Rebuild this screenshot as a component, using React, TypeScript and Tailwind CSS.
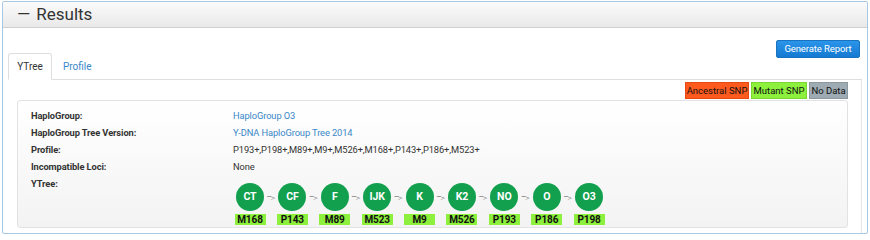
import React from "react";

const nodes = [
  ["CT", "M168"],
  ["CF", "P143"],
  ["F", "M89"],
  ["IJK", "M523"],
  ["K", "M9"],
  ["K2", "M526"],
  ["NO", "P193"],
  ["O", "P186"],
  ["O3", "P198"],
];

const rows: [string, React.ReactNode][] = [
  ["HaploGroup:", <span className="text-[#3a87c8]">HaploGroup O3</span>],
  ["HaploGroup Tree Version:", <span className="text-[#3a87c8]">Y-DNA HaploGroup Tree 2014</span>],
  ["Profile:", <span>P193+,P198+,M89+,M9+,M526+,M168+,P143+,P186+,M523+</span>],
  ["Incompatible Loci:", <span>None</span>],
];

export default function App() {
  return (
    <div className="w-[870px] h-[240px] bg-white" style={{ fontFamily: "Roboto, 'Liberation Sans', Arial, sans-serif" }}>
      <div className="ml-[2px] mt-[1px] w-[866px] h-[233px] border border-[#a6c8e4] rounded-[2px] flex flex-col overflow-hidden">
        <div className="h-[26px] bg-gradient-to-b from-[#fbfbfb] to-[#e9e9e9] border-b border-[#cfcfcf] flex items-center pl-[14px] text-[17px] text-[#333] leading-none shrink-0">
          <span className="mr-[6px]">—</span>
          <span>Results</span>
        </div>
        <div className="flex justify-end pr-[7px] pt-[12px]">
          <button className="h-[18px] w-[84px] text-[9.5px] tracking-[-0.1px] leading-none text-white rounded-[2px] bg-gradient-to-b from-[#2a95ea] to-[#1479d2] border border-[#1a73c0]">
            Generate Report
          </button>
        </div>
        <div className="flex-1 flex flex-col mt-[-4px] pl-[5px] pr-[5px]">
          <div className="flex items-end h-[26px] border-b border-[#dedede] text-[10px] shrink-0">
            <div className="h-[27px] w-[44px] border border-[#dedede] border-b-white rounded-t-[3px] bg-white flex items-center justify-center text-[#333] mb-[-1px]">
              YTree
            </div>
            <div className="h-[26px] px-[11px] flex items-center text-[#3a87c8]">Profile</div>
          </div>
          <div className="flex-1 border-r border-[#e6e6e6] flex flex-col pl-[9px] pr-[13px]">
            <div className="flex justify-end gap-[2px] mt-[2px] text-[9.5px] leading-none text-[#111]">
              <div className="h-[17px] w-[64px] flex items-center justify-center bg-[#ff5a1e] border border-[#e64a12]">Ancestral SNP</div>
              <div className="h-[17px] w-[56px] flex items-center justify-center bg-[#8cf03c] border border-[#7bd632]">Mutant SNP</div>
              <div className="h-[17px] w-[39px] flex items-center justify-center bg-[#9eabb3] border border-[#8c98a0]">No Data</div>
            </div>
            <div className="mt-[1px] h-[128px] border border-[#e2e2e2] rounded-[3px] bg-gradient-to-b from-white to-[#f3f3f3] pl-[13px] pt-[6px] text-[9.3px] tracking-[-0.1px] text-[#333]">
              {rows.map(([label, value], i) => (
                <div key={i} className="flex h-[17px] items-center">
                  <div className="w-[202px] font-bold">{label}</div>
                  <div>{value}</div>
                </div>
              ))}
              <div className="flex">
                <div className="w-[202px] font-bold h-[17px] flex items-center">YTree:</div>
                <div className="flex pt-[8px] pl-[2px]">
                  {nodes.map(([n, m], i) => (
                    <div key={n} className="flex">
                      <div className="flex flex-col items-center w-[30px]">
                        <div className="w-[28px] h-[28px] rounded-full bg-[#12a04f] text-white font-bold text-[10.5px] flex items-center justify-center">
                          {n}
                        </div>
                        <div className="mt-[3px] w-[31px] h-[11px] bg-[#8cf03c] text-[#111] font-bold text-[10px] leading-[11px] text-center">
                          {m}
                        </div>
                      </div>
                      {i < nodes.length - 1 && (
                        <div className="w-[12.4px] h-[28px] flex items-center justify-center text-[8px] text-[#777] whitespace-nowrap" style={{ fontFamily: "'DejaVu Sans', sans-serif" }}>
                          <span className="tracking-[-1px]">--</span>
                          <span className="text-[6px]">&gt;</span>
                        </div>
                      )}
                    </div>
                  ))}
                </div>
              </div>
            </div>
          </div>
        </div>
      </div>
    </div>
  );
}
